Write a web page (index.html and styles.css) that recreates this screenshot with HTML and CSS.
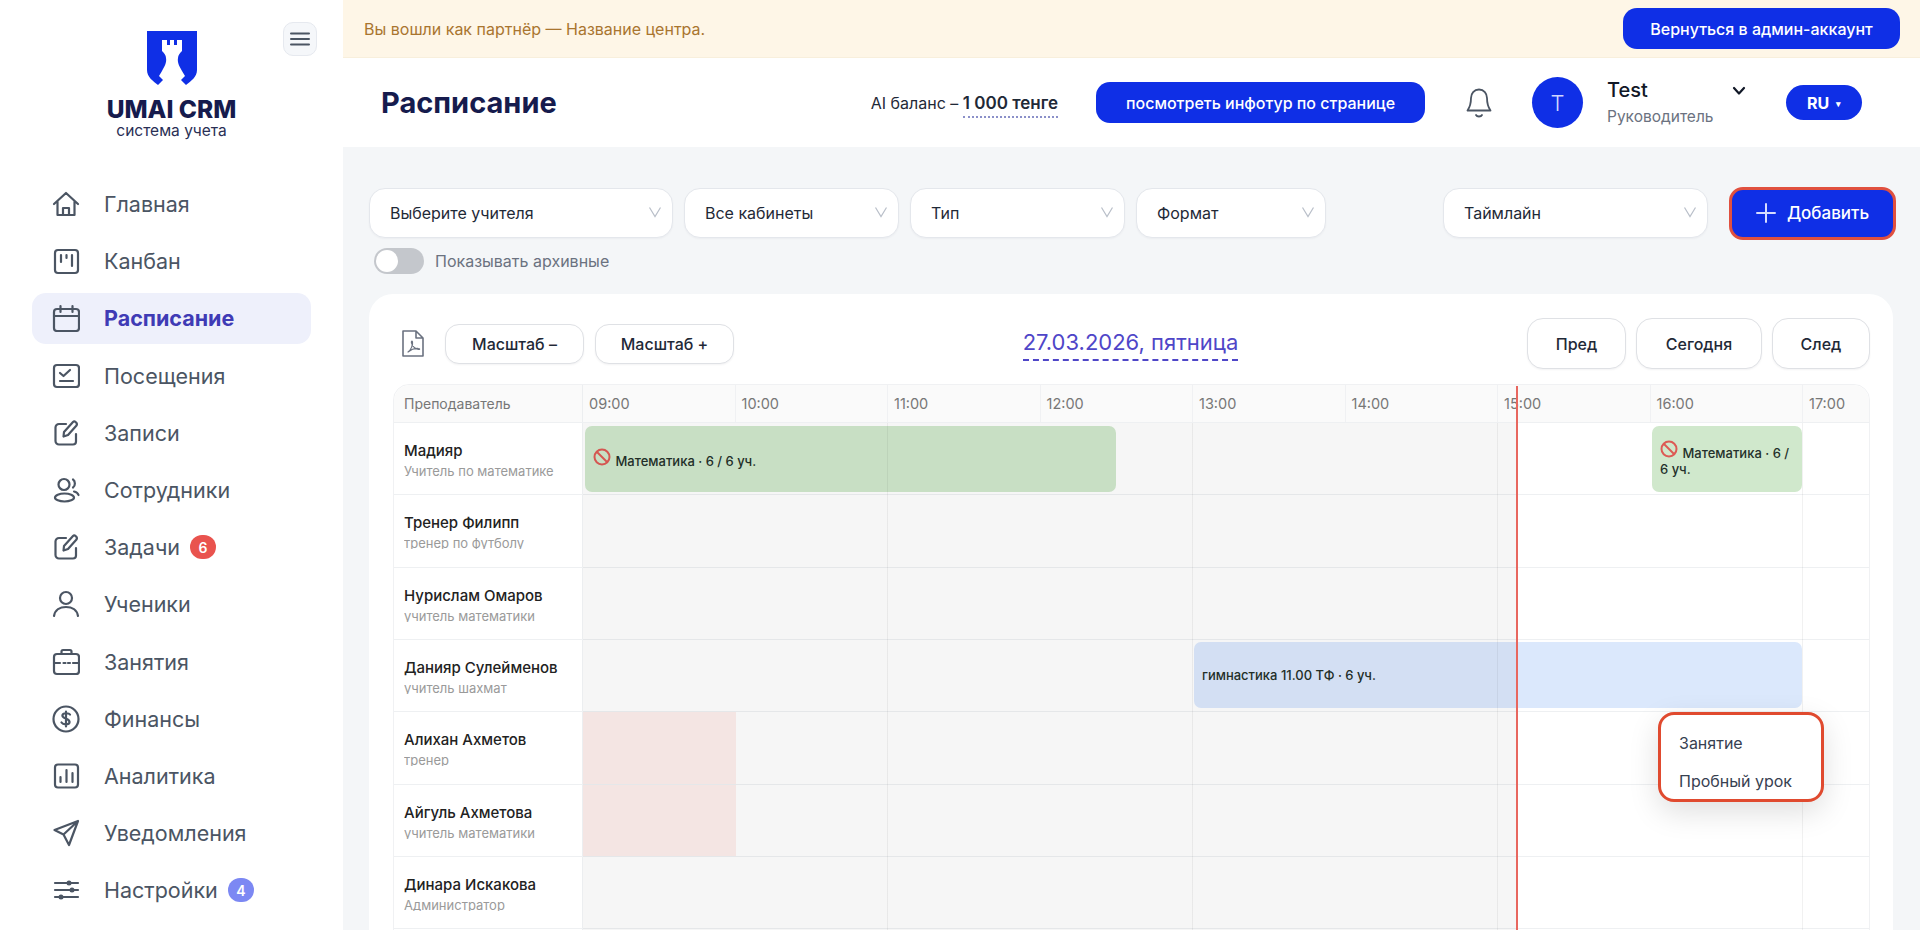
FILE: index.html
```html
<!DOCTYPE html>
<html lang="ru">
  <head>
    <meta charset="UTF-8" />
    <meta name="viewport" content="width=device-width, initial-scale=1.0" />
    <title>Расписание</title>
    <link rel="stylesheet" href="styles.css">
  </head>
  <body>
    <div class="app">
      <aside class="sidebar">
        <div class="side-top">
          <div class="logo">
            <svg class="logo-mark" viewBox="0 0 50 54">
              <path fill="#0f2fe6" d="M0 0H50V39C50 46 44 50 39 54L34 49 38 45 35 40C33 36 30 32 31 27 31 24 33 22 35 20V9H30V14H27V9H23V14H20V9H15V20C17 22 19 24 19 27 20 32 17 36 15 40L12 45 16 49 11 54C6 50 0 46 0 39Z"/>
            </svg>
            <div class="logo-name">UMAI CRM</div>
            <div class="logo-sub">система учета</div>
          </div>
          <button class="burger">
            <svg viewBox="0 0 24 24" width="24" height="24" fill="none" stroke="#4b5563" stroke-width="2" stroke-linecap="round"><path d="M3 6.5h18M3 12h18M3 17.5h18"/></svg>
          </button>
        </div>
        <nav class="nav">
          <a class="nav-item">
            <svg class="nav-icon" viewBox="0 0 28 28"><path d="M2 14 14 3l12 11M5.500 11.500V25h17V11.500M11 25v-7h6v7"/></svg>
            Главная
          </a>
          <a class="nav-item">
            <svg class="nav-icon" viewBox="0 0 28 28"><rect x="3" y="3" width="23" height="23" rx="3"/><path d="M9 8v7M14.500 8v3M20 8v11"/></svg>
            Канбан
          </a>
          <a class="nav-item active">
            <svg class="nav-icon" viewBox="0 0 28 28"><rect x="2" y="5" width="25" height="22" rx="3"/><path d="M2 12h25M8.500 2v6M20.500 2v6"/></svg>
            Расписание
          </a>
          <a class="nav-item">
            <svg class="nav-icon" viewBox="0 0 28 28"><rect x="2" y="3" width="25" height="22" rx="3"/><path d="m8 11 3.500 3L18 8M8 19h13"/></svg>
            Посещения
          </a>
          <a class="nav-item">
            <svg class="nav-icon" viewBox="0 0 28 28"><path d="M14 5H7a3.500 3.500 0 0 0-3.500 3.500V22A3.500 3.500 0 0 0 7 25.500h14a3 3 0 0 0 3-3V15"/><path d="M12 13 21 3c1.500-1.500 5 1 3.500 3.500L16 16l-4.500 1.500Z"/></svg>
            Записи
          </a>
          <a class="nav-item">
            <svg class="nav-icon" viewBox="0 0 28 28"><circle cx="12" cy="8.500" r="5.500"/><path d="M21 3.500c2.500 1.500 2.500 6.500 0 8"/><ellipse cx="12.500" cy="21.500" rx="9.500" ry="4"/><path d="M22 15.500c2.500.5 4 2 4.500 3.500"/></svg>
            Сотрудники
          </a>
          <a class="nav-item">
            <svg class="nav-icon" viewBox="0 0 28 28"><path d="M14 5H7a3.500 3.500 0 0 0-3.500 3.500V22A3.500 3.500 0 0 0 7 25.500h14a3 3 0 0 0 3-3V15"/><path d="M12 13 21 3c1.500-1.500 5 1 3.500 3.500L16 16l-4.500 1.500Z"/></svg>
            Задачи
            <span class="badge red">6</span>
          </a>
          <a class="nav-item">
            <svg class="nav-icon" viewBox="0 0 28 28"><circle cx="14" cy="8" r="6"/><path d="M2 26c1-6 6-9 12-9s11 3 12 9"/></svg>
            Ученики
          </a>
          <a class="nav-item">
            <svg class="nav-icon" viewBox="0 0 28 28"><rect x="2" y="6" width="25" height="20" rx="3"/><path d="M9.500 6V3.500A1.500 1.500 0 0 1 11 2h7a1.500 1.500 0 0 1 1.500 1.500V6M2 15h6M11.500 15h2M16 15h2M21 15h6"/></svg>
            Занятия
          </a>
          <a class="nav-item">
            <svg class="nav-icon" viewBox="0 0 28 28"><circle cx="14" cy="14" r="12.500"/><path d="M18 9.500c-1-1.500-6.500-2-7.500.5-1.500 4 8 3 7 7.500-.5 2.500-6.500 2.500-8 0M14 6.500v15"/></svg>
            Финансы
          </a>
          <a class="nav-item">
            <svg class="nav-icon" viewBox="0 0 28 28"><rect x="3" y="2.500" width="23" height="23" rx="3"/><path d="M8.500 20v-5M14.500 20V8M20.500 20v-9"/></svg>
            Аналитика
          </a>
          <a class="nav-item">
            <svg class="nav-icon" viewBox="0 0 28 28"><path d="M26 2 2.500 11l9 4.500L17 26 26 2ZM11.500 15.500 26 2"/></svg>
            Уведомления
          </a>
          <a class="nav-item">
            <svg class="nav-icon" viewBox="0 0 28 28"><path d="M3 7h23M3 14h23M3 21h23"/><circle class="dot" cx="17" cy="7" r="2.500"/><circle class="dot" cx="20" cy="14" r="2.500"/><circle class="dot" cx="9" cy="21" r="2.500"/></svg>
            Настройки
            <span class="badge blue">4</span>
          </a>
        </nav>
      </aside>

      <div class="content">
        <div class="banner">
          <span>Вы вошли как партнёр — Название центра.</span>
          <button class="btn-blue back-btn">Вернуться в админ-аккаунт</button>
        </div>

        <header class="topbar">
          <h1 class="page-title">Расписание</h1>
          <div class="balance">AI баланс – <b>1 000 тенге</b></div>
          <button class="btn-blue tour-btn">посмотреть инфотур по странице</button>
          <svg class="bell" viewBox="0 0 26 30" fill="none" stroke="#4b5563" stroke-width="1.800" stroke-linecap="round" stroke-linejoin="round"><path d="M13 1.500c-5 0-8 4-8 8.500 0 6-1 9-3.500 12.500h23C22 19 21 16 21 10c0-4.500-3-8.500-8-8.500ZM10 27c1 2 5 2 6 0"/></svg>
          <div class="avatar">T</div>
          <div class="user">
            <div class="user-name">Test</div>
            <div class="user-role">Руководитель</div>
            <svg class="user-caret" viewBox="0 0 14 10" fill="none" stroke="#111827" stroke-width="2.200" stroke-linecap="round" stroke-linejoin="round"><path d="m2 2 5 5.500L12 2"/></svg>
          </div>
          <button class="lang">RU <span class="lang-arrow">▾</span></button>
        </header>

        <main class="main">
          <div class="filters">
            <div class="select w-teacher">Выберите учителя<svg class="chev" viewBox="0 0 14 12"><path d="m1.500 1.500 5.500 9 5.500-9"/></svg></div>
            <div class="select w-room">Все кабинеты<svg class="chev" viewBox="0 0 14 12"><path d="m1.500 1.500 5.500 9 5.500-9"/></svg></div>
            <div class="select w-type">Тип<svg class="chev" viewBox="0 0 14 12"><path d="m1.500 1.500 5.500 9 5.500-9"/></svg></div>
            <div class="select w-format">Формат<svg class="chev" viewBox="0 0 14 12"><path d="m1.500 1.500 5.500 9 5.500-9"/></svg></div>
            <div class="select w-view">Таймлайн<svg class="chev" viewBox="0 0 14 12"><path d="m1.500 1.500 5.500 9 5.500-9"/></svg></div>
            <button class="add-btn">
              <svg viewBox="0 0 20 20" width="20" height="20" fill="none" stroke="#d6dcff" stroke-width="2" stroke-linecap="round"><path d="M10 1v18M1 10h18"/></svg>
              Добавить
            </button>
          </div>
          <div class="archive">
            <span class="toggle"><span class="knob"></span></span>
            Показывать архивные
          </div>

          <section class="card">
            <div class="toolbar">
              <div class="tool-left">
                <svg class="pdf" viewBox="0 0 22 27" fill="none" stroke="#6b7280" stroke-width="1.600" stroke-linejoin="round"><path d="M1 1h13l7 7v18H1ZM14 1v7h7"/><path stroke-width="1.200" d="M6 22c3-2 5-7 4.500-10-.3-1.500-1.500-1-1 1 .6 3 3.500 6 7 6.500 1.500.2 1.500-1 0-1-3-.2-8 1.500-10.500 3.500Z"/></svg>
                <button class="btn-light">Масштаб –</button>
                <button class="btn-light">Масштаб +</button>
              </div>
              <div class="date">27.03.2026, пятница</div>
              <div class="tool-right">
                <button class="btn-nav prev">Пред</button>
                <button class="btn-nav today">Сегодня</button>
                <button class="btn-nav next">След</button>
              </div>
            </div>

            <div class="table">
              <div class="row head">
                <div class="teacher">Преподаватель</div>
                <div class="hours">
                  <span>09:00</span><span>10:00</span><span>11:00</span><span>12:00</span><span>13:00</span><span>14:00</span><span>15:00</span><span>16:00</span><span>17:00</span>
                </div>
              </div>

              <div class="row">
                <div class="teacher"><div class="name">Мадияр</div><div class="role">Учитель по математике</div></div>
                <div class="track">
                  <div class="event green" style="left: 2px; width: 531px;">
                    <div><svg class="ban" viewBox="0 0 18 18"><circle cx="9" cy="9" r="7.500"/><path d="m4 4 10 10"/></svg> Математика · 6 / 6 уч.</div>
                  </div>
                  <div class="event green" style="left: 1069px; width: 150px;">
                    <div><svg class="ban" viewBox="0 0 18 18"><circle cx="9" cy="9" r="7.500"/><path d="m4 4 10 10"/></svg> Математика · 6 / 6 уч.</div>
                  </div>
                </div>
              </div>
              <div class="row">
                <div class="teacher"><div class="name">Тренер Филипп</div><div class="role">тренер по футболу</div></div>
                <div class="track"></div>
              </div>
              <div class="row">
                <div class="teacher"><div class="name">Нурислам Омаров</div><div class="role">учитель математики</div></div>
                <div class="track"></div>
              </div>
              <div class="row">
                <div class="teacher"><div class="name">Данияр Сулейменов</div><div class="role">учитель шахмат</div></div>
                <div class="track">
                  <div class="event blue" style="left: 611px; width: 608px;"><div>гимнастика 11.00 ТФ · 6 уч.</div></div>
                </div>
              </div>
              <div class="row">
                <div class="teacher"><div class="name">Алихан Ахметов</div><div class="role">тренер</div></div>
                <div class="track"><div class="off-cell"></div></div>
              </div>
              <div class="row">
                <div class="teacher"><div class="name">Айгуль Ахметова</div><div class="role">учитель математики</div></div>
                <div class="track"><div class="off-cell"></div></div>
              </div>
              <div class="row">
                <div class="teacher"><div class="name">Динара Искакова</div><div class="role">Администратор</div></div>
                <div class="track"></div>
              </div>
              <div class="row">
                <div class="teacher"></div>
                <div class="track"></div>
              </div>

              <div class="past"></div>
              <div class="grid-lines"></div>
              <div class="now-line"></div>

              <div class="menu">
                <div class="menu-item">Занятие</div>
                <div class="menu-item">Пробный урок</div>
              </div>
            </div>
          </section>
        </main>
      </div>
    </div>
  </body>
</html>
```

FILE: styles.css
```css
* {
  margin: 0;
  padding: 0;
  box-sizing: border-box;
}
html,
body {
  height: 100%;
  overflow: hidden;
}
body {
  font-family: "Inter", "Liberation Sans", sans-serif;
  color: #1f2937;
  background: #fff;
}
button {
  font-family: inherit;
  border: 0;
  cursor: pointer;
}
.app {
  display: flex;
  height: 930px;
}

/* sidebar */
.sidebar {
  width: 343px;
  flex: none;
  background: #fff;
}
.side-top {
  display: flex;
  align-items: flex-start;
  height: 178.5px;
  padding: 22px 0 0 60px;
}
.logo {
  width: 223px;
  padding-top: 9px;
  display: flex;
  flex-direction: column;
  align-items: center;
  color: #161b4d;
}
.logo-mark {
  width: 50px;
  height: 54px;
  display: block;
}
.logo-name {
  margin-top: 9px;
  font-size: 24.5px;
  line-height: 30px;
  font-weight: 800;
}
.logo-sub {
  font-size: 15.5px;
  line-height: 20px;
  margin-top: -3px;
  color: #2a2f55;
}
.burger {
  width: 34px;
  height: 34px;
  border: 1px solid #e6e9ef;
  border-radius: 10px;
  background: #f5f7fa;
  display: flex;
  align-items: center;
  justify-content: center;
}
.nav {
  display: flex;
  flex-direction: column;
  gap: 6.2px;
  padding: 0 32px;
}
.nav-item {
  height: 51px;
  display: flex;
  align-items: center;
  padding-left: 20px;
  border-radius: 14px;
  font-size: 21.5px;
  color: #4b5563;
}
.nav-icon {
  width: 28px;
  height: 28px;
  margin-right: 24px;
  flex: none;
  fill: none;
  stroke: #4b5563;
  stroke-width: 2.200;
  stroke-linecap: round;
  stroke-linejoin: round;
}
.nav-icon .dot {
  fill: #4b5563;
  stroke: none;
}
.nav-item.active {
  background: #eef0fb;
  color: #3f3bb5;
  font-weight: 700;
}
.badge {
  margin-left: 10px;
  width: 26px;
  height: 24px;
  border-radius: 12px;
  display: flex;
  align-items: center;
  justify-content: center;
  color: #fff;
  font-size: 14px;
  font-weight: 600;
}
.badge.red {
  background: #e9534e;
}
.badge.blue {
  background: #7c88f3;
}

/* top */
.content {
  flex: 1;
  min-width: 0;
  display: flex;
  flex-direction: column;
}
.banner {
  height: 58px;
  flex: none;
  display: flex;
  align-items: center;
  justify-content: space-between;
  padding: 0 20px 0 21px;
  background: #fef6e7;
  border-bottom: 1px solid #f8efdc;
  color: #a9752f;
  font-size: 16px;
}
.btn-blue {
  background: #0f2fe6;
  color: #fff;
  font-size: 16px;
  font-weight: 500;
  border-radius: 14px;
}
.back-btn {
  width: 277px;
  height: 41px;
}
.topbar {
  height: 89px;
  flex: none;
  display: flex;
  align-items: center;
  padding-left: 38px;
  background: #fff;
}
.page-title {
  font-size: 29px;
  font-weight: 700;
  color: #161b4d;
  margin-right: auto;
}
.balance {
  font-size: 16px;
  color: #1f2937;
}
.balance b {
  font-size: 17px;
  font-weight: 600;
  padding-bottom: 3px;
  border-bottom: 2px dotted #8b90c9;
}
.tour-btn {
  width: 329px;
  height: 41px;
  margin-left: 38px;
}
.bell {
  width: 26px;
  height: 30px;
  margin-left: 41px;
  flex: none;
}
.avatar {
  width: 51px;
  height: 51px;
  margin-left: 40px;
  flex: none;
  border-radius: 50%;
  background: #0f2fe6;
  color: #cfd6ff;
  font-size: 22px;
  font-weight: 300;
  display: flex;
  align-items: center;
  justify-content: center;
}
.user {
  position: relative;
  width: 139px;
  margin-left: 24px;
  margin-right: 40px;
}
.user-name {
  font-size: 20px;
  font-weight: 500;
  line-height: 26px;
  color: #111827;
}
.user-role {
  font-size: 15.5px;
  line-height: 24px;
  color: #6b7280;
  margin-top: 2px;
}
.user-caret {
  position: absolute;
  top: 9px;
  right: 0;
  width: 14px;
  height: 10px;
}
.lang {
  width: 76px;
  height: 35px;
  margin-right: 58px;
  border-radius: 18px;
  background: #0f2fe6;
  color: #fff;
  font-size: 16px;
  font-weight: 700;
}
.lang-arrow {
  font-size: 9px;
  vertical-align: 2px;
  margin-left: 3px;
}

/* filters */
.main {
  flex: 1;
  min-height: 0;
  background: #f4f6f8;
  padding: 41px 27px 0 26px;
}
.filters {
  display: flex;
  align-items: center;
  gap: 11px;
  height: 50px;
}
.select {
  height: 50px;
  display: flex;
  align-items: center;
  justify-content: space-between;
  padding: 0 10px 0 20px;
  background: #fff;
  border: 1px solid #e4e7ec;
  border-radius: 16px;
  font-size: 16px;
  color: #1f2937;
  box-shadow: 0 1px 2px rgba(16, 24, 40, 0.04);
}
.chev {
  width: 14px;
  height: 12px;
  fill: none;
  stroke: #b9bfc9;
  stroke-width: 1.200;
  margin-top: -2px;
}
.w-teacher {
  width: 304px;
}
.w-room {
  width: 215px;
}
.w-type {
  width: 215px;
}
.w-format {
  width: 190px;
}
.w-view {
  width: 265px;
  margin-left: auto;
  margin-right: 10px;
}
.add-btn {
  width: 167px;
  height: 53px;
  margin-right: -3px;
  flex: none;
  display: flex;
  align-items: center;
  justify-content: center;
  gap: 11px;
  background: #0f2fe6;
  border: 3px solid #e0503f;
  border-radius: 14px;
  color: #fff;
  font-size: 17px;
  font-weight: 500;
}
.archive {
  display: flex;
  align-items: center;
  gap: 11px;
  height: 26px;
  margin-top: 10px;
  padding-left: 5px;
  font-size: 16px;
  color: #6b7280;
}
.toggle {
  width: 50px;
  height: 26px;
  padding: 2px;
  background: #c4c7cc;
  border-radius: 13px;
}
.knob {
  display: block;
  width: 22px;
  height: 22px;
  border-radius: 50%;
  background: #fff;
}

/* card */
.card {
  margin-top: 20px;
  height: 700px;
  padding: 24px 23px 0 24px;
  background: #fff;
  border-radius: 24px 24px 0 0;
}
.toolbar {
  display: flex;
  align-items: center;
  justify-content: space-between;
  height: 51px;
}
.tool-left {
  display: flex;
  align-items: center;
  gap: 11px;
  padding-left: 9px;
}
.pdf {
  width: 22px;
  height: 27px;
  margin-right: 10px;
}
.btn-light {
  width: 139px;
  height: 40px;
  background: #fff;
  border: 1px solid #dfe1e5;
  border-radius: 14px;
  font-size: 16px;
  font-weight: 500;
  color: #1f2937;
  box-shadow: 0 1px 2px rgba(16, 24, 40, 0.05);
}
.date {
  font-size: 22px;
  line-height: 30px;
  color: #4f46c8;
  border-bottom: 2px dashed #4f46c8;
  padding-bottom: 2px;
}
.tool-right {
  display: flex;
  gap: 10px;
}
.btn-nav {
  height: 51px;
  background: #fff;
  border: 1px solid #dfe1e5;
  border-radius: 16px;
  font-size: 16px;
  font-weight: 500;
  color: #1f2937;
  box-shadow: 0 1px 2px rgba(16, 24, 40, 0.05);
}
.prev {
  width: 99px;
}
.today {
  width: 126px;
}
.next {
  width: 98px;
}

/* timeline */
.table {
  position: relative;
  margin-top: 15px;
  border: 1px solid #f0f1f3;
  border-radius: 16px 16px 0 0;
  height: 600px;
}
.row {
  display: flex;
  height: 72.33px;
  border-bottom: 1px solid #eef0f2;
}
.row.head {
  height: 38px;
  background: #fafafa;
  border-radius: 16px 16px 0 0;
  color: #777;
  font-size: 14.500px;
}
.teacher {
  width: 189px;
  flex: none;
  padding: 18px 0 0 10px;
  border-right: 1px solid #eceef0;
}
.head .teacher {
  padding-top: 10px;
  line-height: 18px;
  font-size: 14px;
}
.hours {
  flex: 1;
  display: grid;
  grid-template-columns: repeat(8, 152.5px) 1fr;
}
.hours span {
  padding: 10px 0 0 6px;
  line-height: 18px;
  border-right: 1px solid #f0f1f3;
}
.hours span:last-child {
  border-right: 0;
}
.name {
  font-size: 15px;
  font-weight: 500;
  line-height: 20px;
  color: #222;
}
.role {
  margin-top: 3px;
  font-size: 13px;
  line-height: 14px;
  height: 13px;
  overflow: hidden;
  color: #9a9a9a;
}
.track {
  position: relative;
  flex: 1;
}
.off-cell {
  width: 153px;
  height: 100%;
  background: #fdeeec;
}
.event {
  position: absolute;
  top: 2.500px;
  height: 66px;
  padding: 0 8px;
  display: flex;
  align-items: center;
  border-radius: 7px;
  font-size: 13px;
  font-weight: 500;
  line-height: 16px;
  color: #24302a;
}
.event.green {
  background: #d0e8cc;
}
.event.blue {
  background: #dbe8fc;
}
.ban {
  width: 18px;
  height: 18px;
  margin-right: 1px;
  vertical-align: 0;
  fill: none;
  stroke: #dd5a54;
  stroke-width: 2;
}
.past {
  position: absolute;
  left: 189px;
  top: 38px;
  bottom: 0;
  width: 934px;
  background: rgba(0, 0, 0, 0.036);
  pointer-events: none;
}
.grid-lines {
  position: absolute;
  left: 189px;
  right: 0;
  top: 38px;
  bottom: 0;
  background-image: repeating-linear-gradient(to right, transparent 0, transparent 151.5px, rgba(0, 0, 0, 0.055) 151.5px, rgba(0, 0, 0, 0.055) 152.5px);
  pointer-events: none;
}
.now-line {
  position: absolute;
  left: 1122px;
  top: 1px;
  bottom: 0;
  width: 2px;
  background: #e8675f;
}
.menu {
  position: absolute;
  left: 1264px;
  top: 327px;
  width: 166px;
  height: 90px;
  padding-top: 9px;
  background: #fff;
  border: 3px solid #e04a2f;
  border-radius: 16px;
  box-shadow: 0 10px 30px rgba(0, 0, 0, 0.13);
}
.menu-item {
  height: 38px;
  padding-left: 18px;
  display: flex;
  align-items: center;
  font-size: 16px;
  color: #374151;
}
```
